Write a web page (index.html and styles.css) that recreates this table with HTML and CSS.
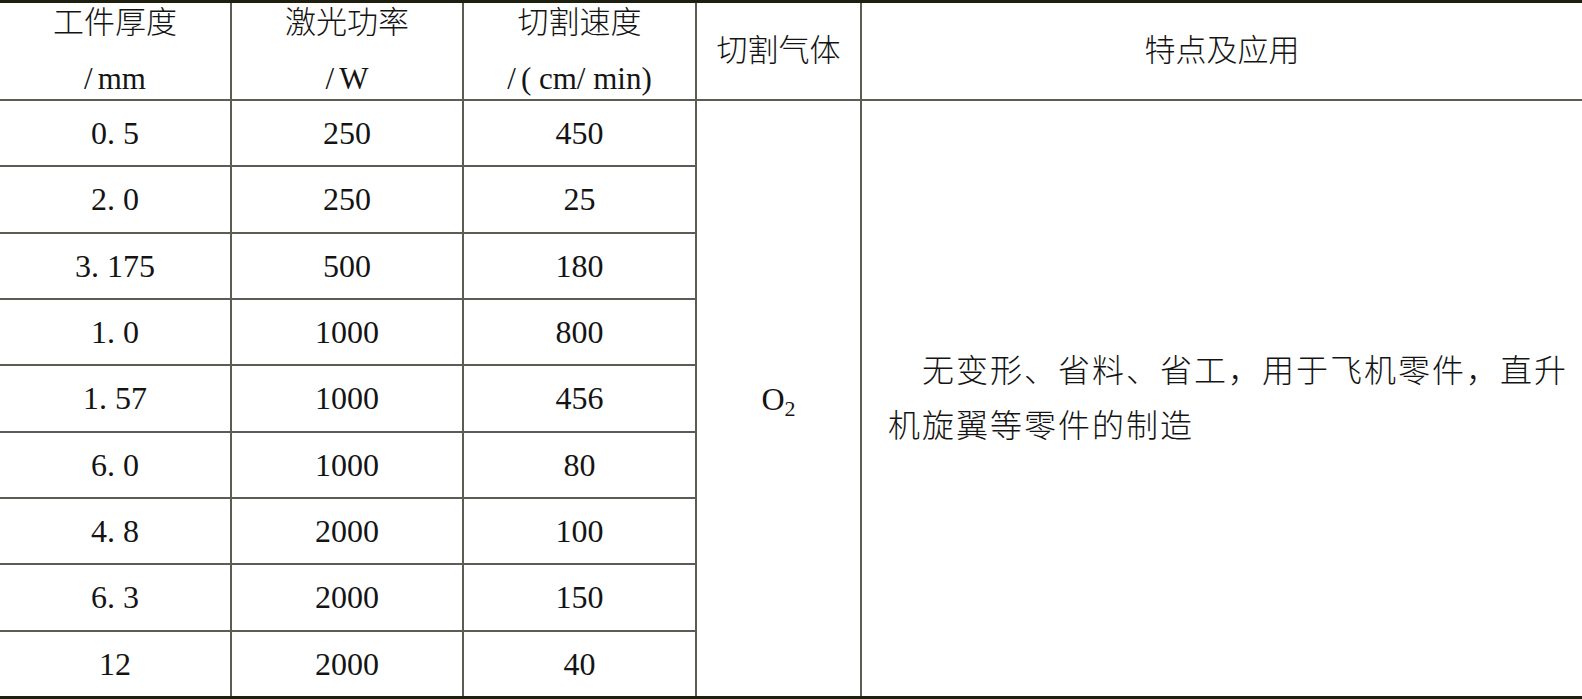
FILE: index.html
```html
<!DOCTYPE html>
<html lang="zh">
<head>
<meta charset="utf-8">
<link rel="stylesheet" href="styles.css">
</head>
<body>
<table class="spec">
  <colgroup>
    <col class="c1"><col class="c2"><col class="c3"><col class="c4"><col class="c5">
  </colgroup>
  <thead>
    <tr class="head">
      <th><span class="l1">工件厚度</span><span class="l2"><span class="sl">/</span>mm</span></th>
      <th><span class="l1">激光功率</span><span class="l2"><span class="sl">/</span>W</span></th>
      <th><span class="l1">切割速度</span><span class="l2"><span class="sl">/</span>( cm/ min)</span></th>
      <th>切割气体</th>
      <th>特点及应用</th>
    </tr>
  </thead>
  <tbody>
    <tr><td>0. 5</td><td>250</td><td>450</td>
      <td class="gas" rowspan="9">O<sub>2</sub></td>
      <td class="desc" rowspan="9"><span class="indent">无变形、省料、省工，用于飞机零件，直升</span><br>机旋翼等零件的制造</td></tr>
    <tr><td>2. 0</td><td>250</td><td>25</td></tr>
    <tr><td>3. 175</td><td>500</td><td>180</td></tr>
    <tr><td>1. 0</td><td>1000</td><td>800</td></tr>
    <tr><td>1. 57</td><td>1000</td><td>456</td></tr>
    <tr><td>6. 0</td><td>1000</td><td>80</td></tr>
    <tr><td>4. 8</td><td>2000</td><td>100</td></tr>
    <tr><td>6. 3</td><td>2000</td><td>150</td></tr>
    <tr><td>12</td><td>2000</td><td>40</td></tr>
  </tbody>
</table>
</body>
</html>
```
FILE: styles.css
```css
html, body {
  margin: 0;
  padding: 0;
  background: #ffffff;
}
.spec {
  width: 1582px;
  height: 699px;
  border-collapse: collapse;
  table-layout: fixed;
  font-family: "Liberation Serif", "Noto Sans CJK SC", serif;
  font-size: 32px;
  font-weight: 300;
  color: #141414;
  border-top: 3px solid #1f1f10;
  border-bottom: 3px solid #1f1f10;
}
.c1 { width: 231px; }
.c2 { width: 232px; }
.c3 { width: 233px; }
.c4 { width: 165px; }
.c5 { width: 721px; }
.spec th, .spec td {
  border: 2px solid #5c5c54;
  padding: 0;
  text-align: center;
  vertical-align: middle;
  font-weight: 300;
}
.spec tr > :first-child { border-left: none; }
.spec tr > :last-child { border-right: none; }
.spec .desc { border-right: none; }
.head th {
  height: 96px;
  line-height: 40px;
  font-size: 31px;
}
.l1, .l2 {
  display: block;
  line-height: 40px;
}
.l2 {
  margin-top: 16px;
}
.sl {
  margin-right: 5px;
}
.spec tbody td {
  height: 64px;
  line-height: 40px;
}
.spec thead th { border-top: none; }
.spec tbody tr:last-child td, .spec .gas, .spec .desc { border-bottom: none; }
.gas sub {
  font-size: 22px;
  vertical-align: -6px;
  line-height: 0;
}
.spec .desc {
  text-align: left;
  padding: 0 4px 0 26px;
  line-height: 55px;
  font-size: 32px;
  letter-spacing: 2px;
  white-space: nowrap;
}
.indent {
  padding-left: 34px;
}
```
